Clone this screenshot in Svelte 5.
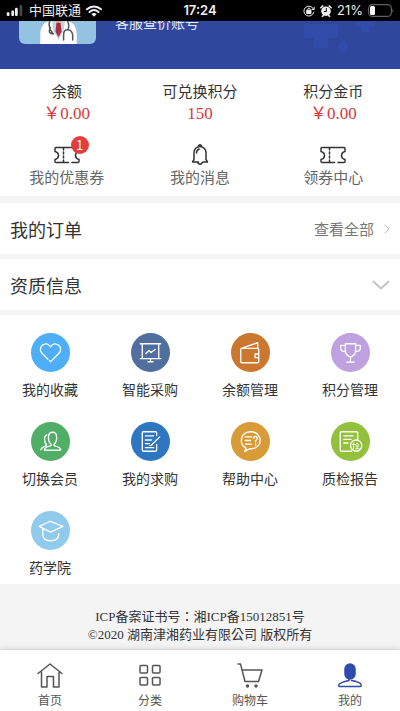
<script>
  let unread = 1;
  let showInfo = false;
  let current = "我的";

  const yen = "\uFFE5";
  const colon = "\uFF1A";

  const balances = [
    { label: "余额", value: yen + "0.00" },
    { label: "可兑换积分", value: "150" },
    { label: "积分金币", value: yen + "0.00" },
  ];

  const shortcuts = [
    { label: "我的优惠券", icon: "coupon" },
    { label: "我的消息", icon: "bell" },
    { label: "领券中心", icon: "ticket" },
  ];

  const services = [
    { label: "我的收藏", icon: "heart" },
    { label: "智能采购", icon: "board" },
    { label: "余额管理", icon: "wallet" },
    { label: "积分管理", icon: "cup" },
    { label: "切换会员", icon: "member" },
    { label: "我的求购", icon: "note" },
    { label: "帮助中心", icon: "help" },
    { label: "质检报告", icon: "report" },
    { label: "药学院", icon: "school" },
  ];

  const tabs = [
    { label: "首页", icon: "home" },
    { label: "分类", icon: "category" },
    { label: "购物车", icon: "cart" },
    { label: "我的", icon: "mine" },
  ];
</script>

<div class="page">
  <div class="status">
    <div class="status-side">
      <svg class="signal" viewBox="0 0 18 12">
        <rect x="0" y="8" width="3" height="4" rx="1" />
        <rect x="5" y="6" width="3" height="6" rx="1" />
        <rect x="9" y="3" width="3" height="9" rx="1" />
        <rect x="14" y="0" width="3" height="12" rx="1" opacity="0.3" />
      </svg>
      <span class="carrier">中国联通</span>
      <svg class="wifi" viewBox="0 0 16 12">
        <path d="M1 4.300C5 .6 11 .6 15 4.300M3.500 7C6.200 4.700 9.800 4.700 12.500 7" />
        <path class="solid" d="M5.300 8.900Q8 6.900 10.700 8.900L8 11.700Z" />
      </svg>
    </div>
    <span class="clock">17:24</span>
    <div class="status-side right">
      <svg class="lock" viewBox="0 0 12 12">
        <path d="M10.600 4.300A5 5 0 1 0 10.800 7.200M9 4.500h2.200V2.300" />
        <rect class="solid" x="4" y="5.300" width="4" height="3.200" />
        <path d="M4.800 5.500V4.300a1.200 1.200 0 0 1 2.400 0v1.200" />
      </svg>
      <svg class="alarm" viewBox="0 0 12 12">
        <circle cx="6" cy="6.200" r="4.800" />
        <path class="ears" d="M.8 2.800L2.800.9M11.200 2.800L9.200.9M2.400 11.500l1-1.300M9.600 11.500l-1-1.300" />
        <path class="hands" d="M6.300 3.500v3H4.200" />
      </svg>
      <span>21%</span>
      <svg class="battery" viewBox="0 0 26 13">
        <rect class="case" x=".7" y=".7" width="22.600" height="11.600" rx="3" />
        <rect x="2" y="2" width="5" height="9" rx="1.500" />
        <path class="tip" d="M24.500 4.500q1.500 2 0 4z" />
      </svg>
    </div>
  </div>

  <header class="profile">
    <svg class="crosses" viewBox="0 0 76 36">
      <path d="M4 3h34v14h-10v10H14V17H4zM56 0h18v6h-5v5h-8V6h-5zM38 23h3v-3h4v3h3v5h-3v3h-4v-3h-3z" />
    </svg>
    <div class="profile-row">
      <svg class="avatar" viewBox="0 0 76 76">
        <rect width="76" height="76" fill="#94c2e2" />
        <circle cx="39" cy="22" r="14" fill="#e9b994" />
        <path d="M21 76V66q0-11 10-13l8-3 8 3q10 2 10 13v10z" fill="#fff" />
        <path d="M32 46h15l-3 7-5 4-6-4z" fill="#e4ad88" />
        <path d="M32 50l7 7 7-7-2 13-5 9-5-9z" fill="#bfd6ea" />
        <path d="M37 55h4l1 9-3 5-3-5z" fill="#a72f3e" />
        <path d="M32 50q-5 8 1 15M46 50q5 7 2 12M44 72v-5q0-5 4-5t5 5v5M31 60q-3 6 3 6" fill="none" stroke="#555" stroke-width="1.500" />
      </svg>
      <span class="nickname">客服查价账号</span>
    </div>
  </header>

  <section class="assets">
    <dl class="thirds">
      {#each balances as item}
        <div class="balance">
          <dt>{item.label}</dt>
          <dd>{item.value}</dd>
        </div>
      {/each}
    </dl>
    <div class="thirds">
      {#each shortcuts as item}
        <a class="shortcut" href="#{item.icon}">
          <span class="shortcut-icon">
            {#if item.icon === "bell"}
              <svg viewBox="0 0 28 24">
                <path d="M12.500 3.700a1.600 1.600 0 0 1 3 0M8 17.500V10.500a6 6 0 0 1 12 0v7l1.500 2.500h-4.300M12.500 20h-6L8 17.500M11.500 20.500q2.500 3.500 5 0M10.500 11q0-3 2.700-4" />
              </svg>
            {:else}
              <svg viewBox="0 0 28 24">
                <path d="M15.500 20.500H3q-1 0-1-1v-2q3.500-1 3.500-4T2 9.500v-3q0-1 1-1h22q1 0 1 1v3q-3.500 1-3.500 4t3.500 4v2q0 1-1 1h-6" />
                <path d="M10.500 6v14" stroke-dasharray="2 2" />
              </svg>
            {/if}
            {#if item.icon === "coupon" && unread}
              <span class="badge">{unread}</span>
            {/if}
          </span>
          {item.label}
        </a>
      {/each}
    </div>
  </section>

  <a class="row" href="#orders">
    <h2>我的订单</h2>
    <span class="more">查看全部</span>
    <svg class="next" viewBox="0 0 6 10"><path d="M1 1l4 4-4 4" /></svg>
  </a>

  <button class="row" aria-expanded={showInfo} on:click={() => (showInfo = !showInfo)}>
    <h2>资质信息</h2>
    <svg class="down" viewBox="0 0 18 10"><path d="M1.500 1.500L9 8.500l7.500-7" /></svg>
  </button>

  <section class="services">
    {#each services as item}
      <a class="service" href="#{item.icon}">
        <span class="circle {item.icon}">
          <svg viewBox="0 0 38 38">
            {#if item.icon === "heart"}
              <path d="M16.500 25.500L11 20a5.300 5.300 0 0 1 0-8q4.500-3.500 8 1.500 3.500-5 8-1.500a5.300 5.300 0 0 1 0 8l-8 8-1-1" />
            {:else if item.icon === "board"}
              <path d="M9 10.500h20M11 10.500v14M27 10.500v14M9 25h20M19 25v3M16.500 28h5M14.500 20l3-3 2 2 4-3" />
            {:else if item.icon === "wallet"}
              <path d="M27 20.500V16q0-1-1-1H10.500q-1 0-1 1v12q0 1 1 1H26q1 0 1-1v-4M10 15l16-5.500V15M27 20.500h-3.500v3.500H27z" />
            {:else if item.icon === "cup"}
              <path d="M14 10.500h10v7q0 4-5 6-5-2-5-6zM14 12h-4.500v3q0 3 4.500 3M24 12h4.500v3q0 3-4.500 3M19 23.500V28M15.500 28.500h7" />
            {:else if item.icon === "member"}
              <path d="M21 10c-4 0-4 3-4 5s.5 5 2.500 6.500V23q-6 1.500-6.500 4 0 .5 1 .5h14q1 0 1-.5-.5-2.500-6.500-4v-1.500C24.500 20 25 17 25 15s0-5-4-5zM15.500 12.500c-3 .5-3 7-.5 9.500v1q-4.500 1.500-5.500 4" />
            {:else if item.icon === "note"}
              <path d="M25 13v-2.500q0-1-1-1H12q-1 0-1 1V27q0 1.500 1.500 1.500H23q2 0 2-1.500v-5M14 13.500h8M14 17.500h6M14 21h4M14 25h8M28 14.500l-8 8-1.500.5" />
            {:else if item.icon === "help"}
              <path d="M14.500 25.500l-1 3 5-2.500c6 .5 10-3.500 10-8 0-5-4-8.500-9.500-8.500s-9 3.500-9 8.500q0 4.500 4.500 7.500v3M14 14.500h6M14 18h5M14 21.500h6M22 16q0-2 1.800-2t1.800 2q0 1-1.600 2v1.500M24 21.500v1" />
            {:else if item.icon === "report"}
              <path d="M26 17v-6.500q0-1-1-1H10q-1 0-1 1V27q0 1.500 1.500 1.500H20M12.500 13.500h9M12.500 17h7M12.500 20.500h4" />
              <circle cx="24.500" cy="23" r="5.500" />
              <path class="fine" d="M22 20.500v5.500M21 22h2M24 22l1.500-1.500L27 22M24 23.500h3M24 26h3.500M25.500 22v3" />
            {:else}
              <path d="M8 15l11-5 12 5-12 5.500zM11.500 17v6q0 6 7.500 6t8-6v-1" />
            {/if}
          </svg>
        </span>
        {item.label}
      </a>
    {/each}
  </section>

  <footer>
    <p>ICP备案证书号{colon}湘ICP备15012851号</p>
    <p>©2020 湖南津湘药业有限公司 版权所有</p>
  </footer>

  <nav>
    {#each tabs as tab}
      <a
        href="#{tab.icon}"
        class={current === tab.label ? "active" : ""}
        on:click={() => (current = tab.label)}
      >
        <svg viewBox="0 0 28 28">
          {#if tab.icon === "home"}
            <path d="M2 12.500L14 3l12 9.500M5.500 11v15H11V15.500h6.500V26H23V11" />
          {:else if tab.icon === "category"}
            <rect x="4" y="4.500" width="7.500" height="7.500" rx="1" />
            <rect x="16.500" y="4.500" width="7.500" height="7.500" rx="1" />
            <rect x="4" y="16.500" width="7.500" height="7.500" rx="1" />
            <rect x="16.500" y="16.500" width="7.500" height="7.500" rx="1" />
          {:else if tab.icon === "cart"}
            <path d="M2 3h2.500L9 20.500h13.500L26 9H6" />
            <circle class="solid" cx="11.500" cy="25" r="1" />
            <circle class="solid" cx="20" cy="25" r="1" />
          {:else}
            <rect class="solid" x="9" y="3" width="10" height="15" rx="5" />
            <path d="M13 18v1.500q-9 2-10 4-.8 2 1 2h20q1.800 0 1-2-1-2.500-9.500-4" />
          {/if}
        </svg>
        {tab.label}
      </a>
    {/each}
  </nav>
</div>

<style>
  :global(body) {
    margin: 0;
    background: #f4f4f4;
  }

  .page {
    display: flex;
    flex-direction: column;
    min-height: 100vh;
    font-family: "Noto Sans CJK SC", sans-serif;
    color: #333;
  }

  svg {
    display: block;
    flex: none;
    fill: none;
    stroke: currentColor;
    stroke-width: 1.5;
    stroke-linecap: round;
    stroke-linejoin: round;
  }

  .solid {
    fill: currentColor;
  }

  a {
    color: inherit;
    text-decoration: none;
  }

  .status {
    display: flex;
    align-items: center;
    height: 21px;
    padding: 0 6px;
    background: #000;
    color: #eee;
    font-family: Inter, "Noto Sans CJK SC", sans-serif;
    font-size: 13px;
    line-height: 21px;
  }

  .status-side {
    display: flex;
    flex: 1;
    align-items: center;
    gap: 5px;
  }

  .right {
    justify-content: flex-end;
  }

  .clock {
    font-weight: 600;
  }

  .signal {
    width: 18px;
    height: 11px;
    fill: #eee;
    stroke: none;
  }

  .wifi {
    width: 16px;
    height: 12px;
    stroke-width: 2;
  }

  .wifi .solid {
    stroke: none;
  }

  .lock {
    width: 12px;
    height: 12px;
    stroke-width: 1;
  }

  .alarm {
    width: 12px;
    height: 12px;
    fill: #eee;
    stroke: none;
  }

  .ears {
    stroke: #eee;
  }

  .hands {
    fill: none;
    stroke: #000;
    stroke-width: 1;
  }

  .battery {
    width: 26px;
    height: 13px;
    fill: #fff;
    stroke: none;
  }

  .case {
    fill: none;
    stroke: #777;
    stroke-width: 1;
  }

  .tip {
    fill: #777;
  }

  .profile {
    position: relative;
    display: flex;
    align-items: flex-end;
    box-sizing: border-box;
    height: 48px;
    padding: 0 19px 25px;
    overflow: hidden;
    background: #2f479d;
  }

  .profile-row {
    display: flex;
    align-items: flex-end;
    gap: 19px;
  }

  .crosses {
    position: absolute;
    top: 0;
    right: 24px;
    width: 76px;
    fill: #314da9;
    stroke: none;
  }

  .avatar {
    width: 77px;
    height: 77px;
    border-radius: 6px;
    stroke: none;
  }

  .nickname {
    padding-bottom: 14px;
    color: #e6eaf6;
    font-size: 14px;
    line-height: 16px;
  }

  .assets {
    padding: 11px 0 8px;
    background: #fff;
  }

  .thirds {
    display: grid;
    grid-template-columns: repeat(3, 1fr);
    margin: 0;
    text-align: center;
  }

  .balance {
    font-size: 15px;
    line-height: 22px;
  }

  dd {
    margin: 0;
    color: #d9383b;
    font-family: "Liberation Serif", "Noto Sans CJK SC", serif;
    font-size: 17px;
    line-height: 24px;
  }

  .shortcut {
    display: flex;
    flex-direction: column;
    align-items: center;
    padding-top: 16px;
    color: #666;
    font-size: 15px;
    line-height: 22px;
  }

  .shortcut-icon {
    position: relative;
    color: #333;
  }

  .shortcut-icon svg {
    width: 28px;
    height: 24px;
  }

  .badge {
    position: absolute;
    top: -6px;
    right: -8px;
    width: 18px;
    height: 18px;
    border-radius: 50%;
    background: #e43d3d;
    color: #fff;
    font-size: 13px;
    line-height: 18px;
    text-align: center;
  }

  .row {
    display: flex;
    align-items: center;
    box-sizing: border-box;
    width: 100%;
    height: 51px;
    margin: 5px 0 0;
    padding: 0 10px;
    border: 0;
    background: #fff;
    color: #333;
    font-family: inherit;
    text-align: left;
  }

  .assets + .row {
    margin-top: 7px;
  }

  h2 {
    flex: 1;
    margin: 0;
    font-size: 18px;
    font-weight: 400;
    line-height: 26px;
  }

  .more {
    margin-right: 10px;
    color: #777;
    font-size: 15px;
    line-height: 22px;
  }

  .next {
    width: 6px;
    height: 10px;
    stroke: #bbb;
    stroke-width: 1;
  }

  .down {
    width: 18px;
    height: 10px;
    stroke: #c4c4c4;
    stroke-width: 2;
  }

  .services {
    display: grid;
    grid-template-columns: repeat(4, 1fr);
    row-gap: 23px;
    margin-top: 5px;
    padding: 18px 0 7px;
    background: #fff;
  }

  .service {
    display: flex;
    flex-direction: column;
    align-items: center;
    gap: 7px;
    font-size: 14px;
    line-height: 20px;
  }

  .circle {
    border-radius: 50%;
    color: #fff;
  }

  .circle svg {
    width: 39px;
    height: 39px;
    stroke-width: 1.3;
  }

  .circle .fine {
    stroke-width: 0.8;
  }

  .heart {
    background: #4eaef7;
  }

  .board {
    background: #506f9e;
  }

  .wallet {
    background: #cb7730;
  }

  .cup {
    background: #bfa1df;
  }

  .member {
    background: #51ae67;
  }

  .note {
    background: #2f76c1;
  }

  .help {
    background: #d99b38;
  }

  .report {
    background: #93c13e;
  }

  .school {
    background: #90caed;
  }

  footer {
    flex: 1;
    padding: 24px 0 5px;
    background: #f4f4f4;
    font-family: "Liberation Serif", "Noto Sans CJK TC", serif;
    font-size: 13px;
    line-height: 18px;
    text-align: center;
  }

  footer p {
    margin: 0;
  }

  nav {
    display: grid;
    grid-template-columns: repeat(4, 1fr);
    box-sizing: border-box;
    height: 62px;
    padding-top: 11px;
    border-top: 1px solid #ddd;
    background: #fff;
    box-shadow: 0 -1px 5px rgba(0, 0, 0, 0.1);
  }

  nav a {
    display: flex;
    flex-direction: column;
    align-items: center;
    gap: 2px;
    color: #555;
    font-size: 12px;
    line-height: 18px;
  }

  nav svg {
    width: 28px;
    height: 28px;
  }

  nav .active svg {
    color: #2f4bad;
  }
</style>
